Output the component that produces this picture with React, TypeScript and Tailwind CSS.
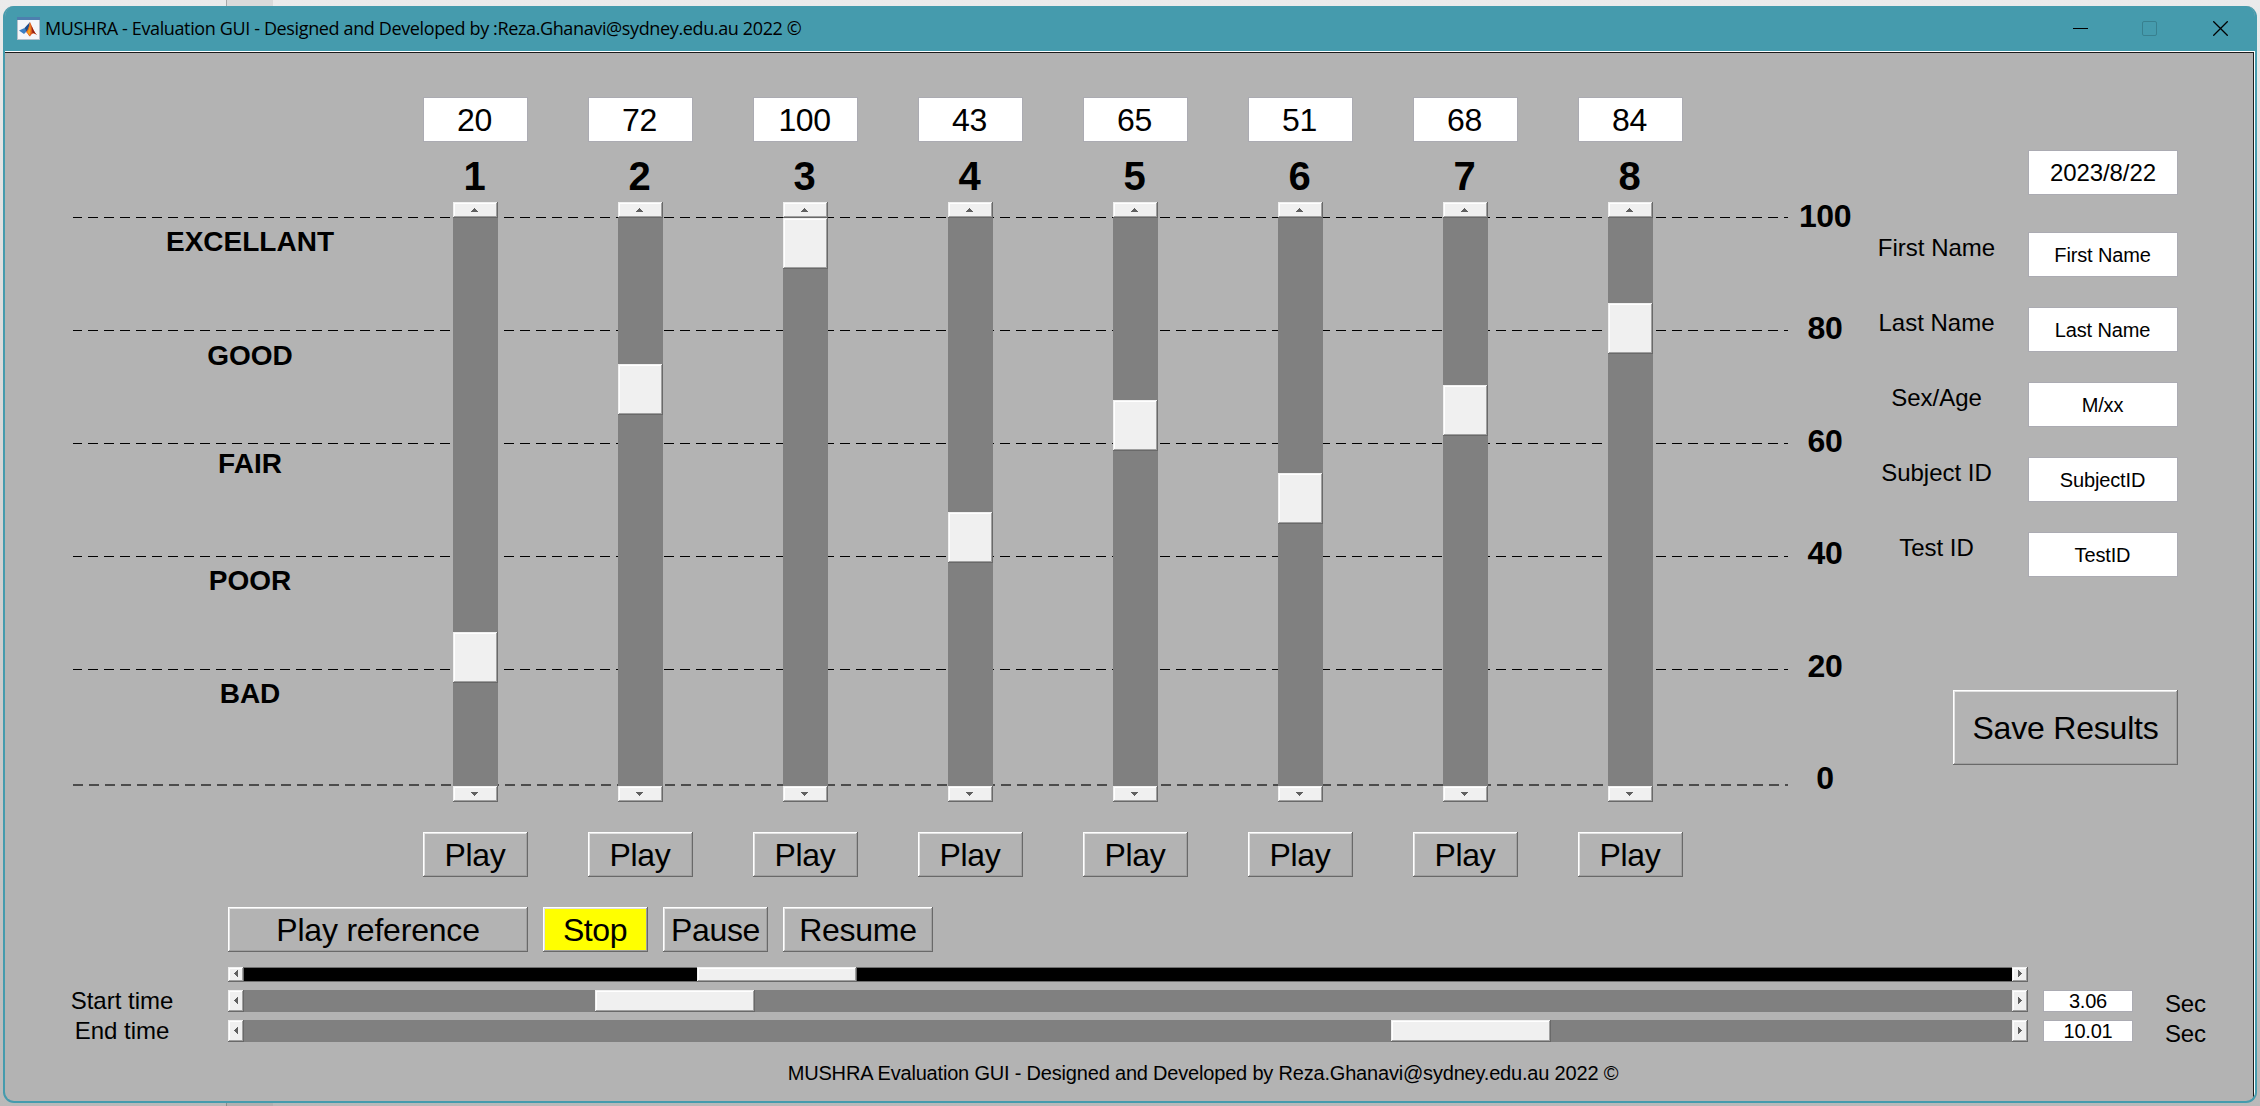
import type { ReactNode } from "react";

const RAISED =
  "shadow-[inset_-1px_-1px_0_#696969,inset_1px_1px_0_#ffffff,inset_-2px_-2px_0_#a0a0a0,inset_2px_2px_0_#e3e3e3]";
const THUMB =
  "bg-[#f0f0f0] shadow-[inset_-1px_-1px_0_#696969,inset_1px_1px_0_#f0f0f0,inset_-2px_-2px_0_#a0a0a0,inset_2px_2px_0_#ffffff]";

// offset: distance in pixels from the top of the track to the thumb
const channels = [
  { value: 20, offset: 414 },
  { value: 72, offset: 146 },
  { value: 100, offset: 0 },
  { value: 43, offset: 294 },
  { value: 65, offset: 182 },
  { value: 51, offset: 255 },
  { value: 68, offset: 167 },
  { value: 84, offset: 85 },
];

const ratings = [
  { label: "EXCELLANT", gap: "mt-[175px]" },
  { label: "GOOD", gap: "mt-[86px]" },
  { label: "FAIR", gap: "mt-[80px]" },
  { label: "POOR", gap: "mt-[89px]" },
  { label: "BAD", gap: "mt-[85px]" },
];

const fields = [
  { label: "First Name", value: "First Name" },
  { label: "Last Name", value: "Last Name" },
  { label: "Sex/Age", value: "M/xx" },
  { label: "Subject ID", value: "SubjectID" },
  { label: "Test ID", value: "TestID" },
];

const arrowPaths = {
  up: "M3 0h1v1h1v1h1v1h1v1H0V3h1V2h1V1h1z",
  down: "M0 0h7v1H6v1H5v1H4v1H3V3H2V2H1V1H0z",
  left: "M3 0h1v7H3V6H2V5H1V4H0V3h1V2h1V1h1z",
  right: "M0 0h1v1h1v1h1v1h1v1H3v1H2v1H1v1H0z",
};

function Arrow({ dir }: { dir: keyof typeof arrowPaths }) {
  const vertical = dir === "up" || dir === "down";
  return (
    <svg
      width={vertical ? 7 : 4}
      height={vertical ? 4 : 7}
      viewBox={vertical ? "0 0 7 4" : "0 0 4 7"}
      shapeRendering="crispEdges"
    >
      <path d={arrowPaths[dir]} fill="#606060" />
    </svg>
  );
}

function Button({ className, children }: { className: string; children: ReactNode }) {
  return (
    <button
      className={`flex shrink-0 items-center justify-center whitespace-nowrap text-[32px] leading-none ${RAISED} ${className}`}
    >
      {children}
    </button>
  );
}

function Field({ className, children }: { className: string; children: ReactNode }) {
  return (
    <div
      className={`flex shrink-0 items-center justify-center border border-[#ababb2] bg-white leading-none ${className}`}
    >
      {children}
    </div>
  );
}

function Channel({ index, value, offset }: { index: number; value: number; offset: number }) {
  return (
    <div className="flex w-[105px] flex-col items-center">
      <Field className="h-[45px] w-[105px] pt-px pr-0.5 text-[32px] tracking-[-0.4px]">{value}</Field>
      <div className="flex h-[60px] items-center pt-[7px] pr-0.5 text-[40px] leading-none font-bold">
        {index}
      </div>
      <div className="flex h-[600px] w-[45px] flex-col bg-[#808080]">
        <div className={`flex h-4 shrink-0 items-center justify-center pr-0.5 ${THUMB}`}>
          <Arrow dir="up" />
        </div>
        <div className="flex-1">
          <div className={`h-[51px] ${THUMB}`} style={{ marginTop: offset }} />
        </div>
        <div className={`flex h-4 shrink-0 items-center justify-center pr-0.5 ${THUMB}`}>
          <Arrow dir="down" />
        </div>
      </div>
      <Button className="mt-[30px] h-[45px] w-[105px] pr-px tracking-[-0.3px]">Play</Button>
    </div>
  );
}

function GridLines() {
  return (
    <svg
      className="absolute top-[164px] left-[68px]"
      width="1715"
      height="569"
      viewBox="0 0 1715 569"
      shapeRendering="crispEdges"
    >
      {[0.5, 113.5, 226.5, 339.5, 452.5].map((y) => (
        <path
          key={y}
          d={`M0 ${y}H1715`}
          stroke="#000"
          strokeWidth="1"
          strokeDasharray="10 6"
          strokeDashoffset="1"
        />
      ))}
      <path d="M0 568H1715" stroke="#4c4c4c" strokeWidth="2" strokeDasharray="10 6" />
    </svg>
  );
}

function HScroll({
  offset,
  height,
  track,
}: {
  offset: number;
  height: string;
  track: string;
}) {
  return (
    <div className={`flex w-[1800px] shrink-0 bg-[#808080] ${height}`}>
      <div className={`flex w-4 shrink-0 items-center justify-center pb-0.5 ${THUMB}`}>
        <Arrow dir="left" />
      </div>
      <div className={`flex flex-1 ${track}`}>
        <div className={`-my-px w-40 ${THUMB}`} style={{ marginLeft: offset }} />
      </div>
      <div className={`flex w-4 shrink-0 items-center justify-center pb-0.5 ${THUMB}`}>
        <Arrow dir="right" />
      </div>
    </div>
  );
}

function TimeRow({
  label,
  value,
  offset,
}: {
  label: string;
  value: string;
  offset: number;
}) {
  return (
    <div className="flex h-[22px] items-center">
      <div className="w-[223px] pl-[11px] text-center text-[24px] leading-[22px]">{label}</div>
      <HScroll offset={offset} height="h-[22px]" track="border-y border-[#808080]" />
      <Field className="ml-[15px] h-[22px] w-[90px] text-[20px] tracking-[-0.2px]">{value}</Field>
      <div className="ml-[32px] pt-1.5 text-[24px] leading-[22px] tracking-[-0.2px]">Sec</div>
    </div>
  );
}

function MatlabIcon() {
  return (
    <svg width="23" height="23" viewBox="0 0 23 23">
      <rect x="0.5" y="0.5" width="22" height="22" fill="#f4f6f9" stroke="#b4bfca" />
      <rect x="0" y="0" width="23" height="3" fill="#4d7fae" />
      <path d="M2 13.5 7.5 11 10 14 7 17z" fill="#3a7fc4" />
      <path d="M7.500 11 13 5 11.500 12 9.500 14.500z" fill="#1c4f8c" />
      <path
        d="M13 5C14.500 8 16.500 14 20 18 17 16 15 15.500 13 19.500 11.500 18.500 10 15.500 9 15 11.500 12.500 12 8 13 5z"
        fill="#d9531e"
      />
      <path d="M13 6C13.800 10 14 14 13 18.500 12 17.500 11 16 10 15.200 12 13 12.600 9 13 6z" fill="#f6a21c" />
      <path d="M14.500 8C15.500 11.500 17.500 15.500 20 18 18 16.300 16.500 15.800 15.500 16z" fill="#8e1f14" />
    </svg>
  );
}

function TitleBar() {
  return (
    <div className="flex h-[45px] shrink-0 items-center bg-[#459bad] pl-3">
      <MatlabIcon />
      <div className="ml-[5px] pb-px font-['Open_Sans',sans-serif] text-[18px] leading-none tracking-[-0.37px] whitespace-nowrap">
        MUSHRA - Evaluation GUI - Designed and Developed by :Reza.Ghanavi@sydney.edu.au 2022 ©
      </div>
      <div className="mr-[27px] ml-auto flex gap-[54px]">
        <svg width="15" height="15" viewBox="0 0 15 15" shapeRendering="crispEdges">
          <path d="M0 7.500h15" stroke="#000" />
        </svg>
        <svg width="15" height="15" viewBox="0 0 15 15" fill="none">
          <rect x="0.5" y="0.5" width="14" height="14" rx="1.500" stroke="#38808f" />
        </svg>
        <svg className="ml-0.5" width="15" height="15" viewBox="0 0 15 15" fill="none">
          <path d="m.3.3 14.400 14.400M14.700.3.3 14.700" stroke="#000" strokeWidth="1.300" />
        </svg>
      </div>
    </div>
  );
}

export default function App() {
  return (
    <div className="flex h-[1106px] w-[2260px] flex-col bg-[linear-gradient(to_bottom,#ebebeb,#b9b9b9)] font-['Liberation_Sans',Arial,sans-serif] text-black">
      <div className="flex h-1.5 shrink-0">
        <div className="ml-[226px] w-[47px] border-l border-[#a8a8a8] bg-[#dadada]" />
      </div>
      <div className="ml-[3px] flex h-[1097px] w-[2254px] shrink-0 flex-col overflow-hidden rounded-[11px] border-x-2 border-b-2 border-[#459bad] bg-[#b3b3b3]">
        <TitleBar />
        <div className="flex flex-1 flex-col border-t border-r border-white">
          <div className="flex flex-1 flex-col border-t border-r border-[#1c1c1c]">
            <div className="relative flex h-[854px] shrink-0">
              <GridLines />
              <div className="ml-[68px] flex w-[350px] flex-col pl-1 text-center text-[28px] leading-[28px] font-bold">
                {ratings.map((r) => (
                  <div key={r.label} className={r.gap}>
                    {r.label}
                  </div>
                ))}
              </div>
              <div className="relative flex gap-[60px] pt-[44px]">
                {channels.map((c, i) => (
                  <Channel key={i} index={i + 1} value={c.value} offset={c.offset} />
                ))}
              </div>
              <div className="ml-[102px] flex w-20 flex-col gap-[80.4px] pt-[147px] text-center text-[32px] leading-[32px] font-bold tracking-[-0.4px]">
                {[100, 80, 60, 40, 20, 0].map((n) => (
                  <div key={n}>{n}</div>
                ))}
              </div>
              <div className="flex w-[313px] flex-col pt-[97px]">
                <Field className="ml-auto h-[45px] w-[150px] text-[24px] tracking-[-0.1px]">
                  2023/8/22
                </Field>
                <div className="mt-[37px] flex flex-col gap-[30px]">
                  {fields.map((f) => (
                    <div key={f.label} className="flex h-[45px]">
                      <div className="flex-1 pt-1 pr-5 text-center text-[24px] leading-[24px]">
                        {f.label}
                      </div>
                      <Field className="h-[45px] w-[150px] pt-px pr-px text-[20px] tracking-[-0.15px]">
                        {f.value}
                      </Field>
                    </div>
                  ))}
                </div>
                <Button className="mt-[113px] ml-auto h-[75px] w-[225px] pt-px tracking-[-0.2px]">
                  Save Results
                </Button>
              </div>
            </div>
            <div className="ml-[223px] flex gap-[15px]">
              <Button className="h-[45px] w-[300px] tracking-[-0.2px]">Play reference</Button>
              <Button className="h-[45px] w-[105px] bg-[#ffff00] pr-px tracking-[-0.4px]">Stop</Button>
              <Button className="h-[45px] w-[105px] tracking-[-0.3px]">Pause</Button>
              <Button className="h-[45px] w-[150px] tracking-[-0.3px]">Resume</Button>
            </div>
            <div className="mt-[15px] ml-[223px] flex">
              <HScroll offset={453} height="h-[15px]" track="border-y border-[#6e6e6e] bg-black" />
            </div>
            <div className="mt-2 flex flex-col gap-2">
              <TimeRow label="Start time" value="3.06" offset={351} />
              <TimeRow label="End time" value="10.01" offset={1147} />
            </div>
            <div className="mt-[21px] pl-[148px] text-center text-[20px] leading-[20px] tracking-[-0.19px]">
              MUSHRA Evaluation GUI - Designed and Developed by Reza.Ghanavi@sydney.edu.au 2022 ©
            </div>
          </div>
        </div>
      </div>
      <div className="flex h-[3px] shrink-0">
        <div className="ml-[226px] w-[47px] border-l border-[#8c8c8c] bg-[#b0b0b0]" />
      </div>
    </div>
  );
}
